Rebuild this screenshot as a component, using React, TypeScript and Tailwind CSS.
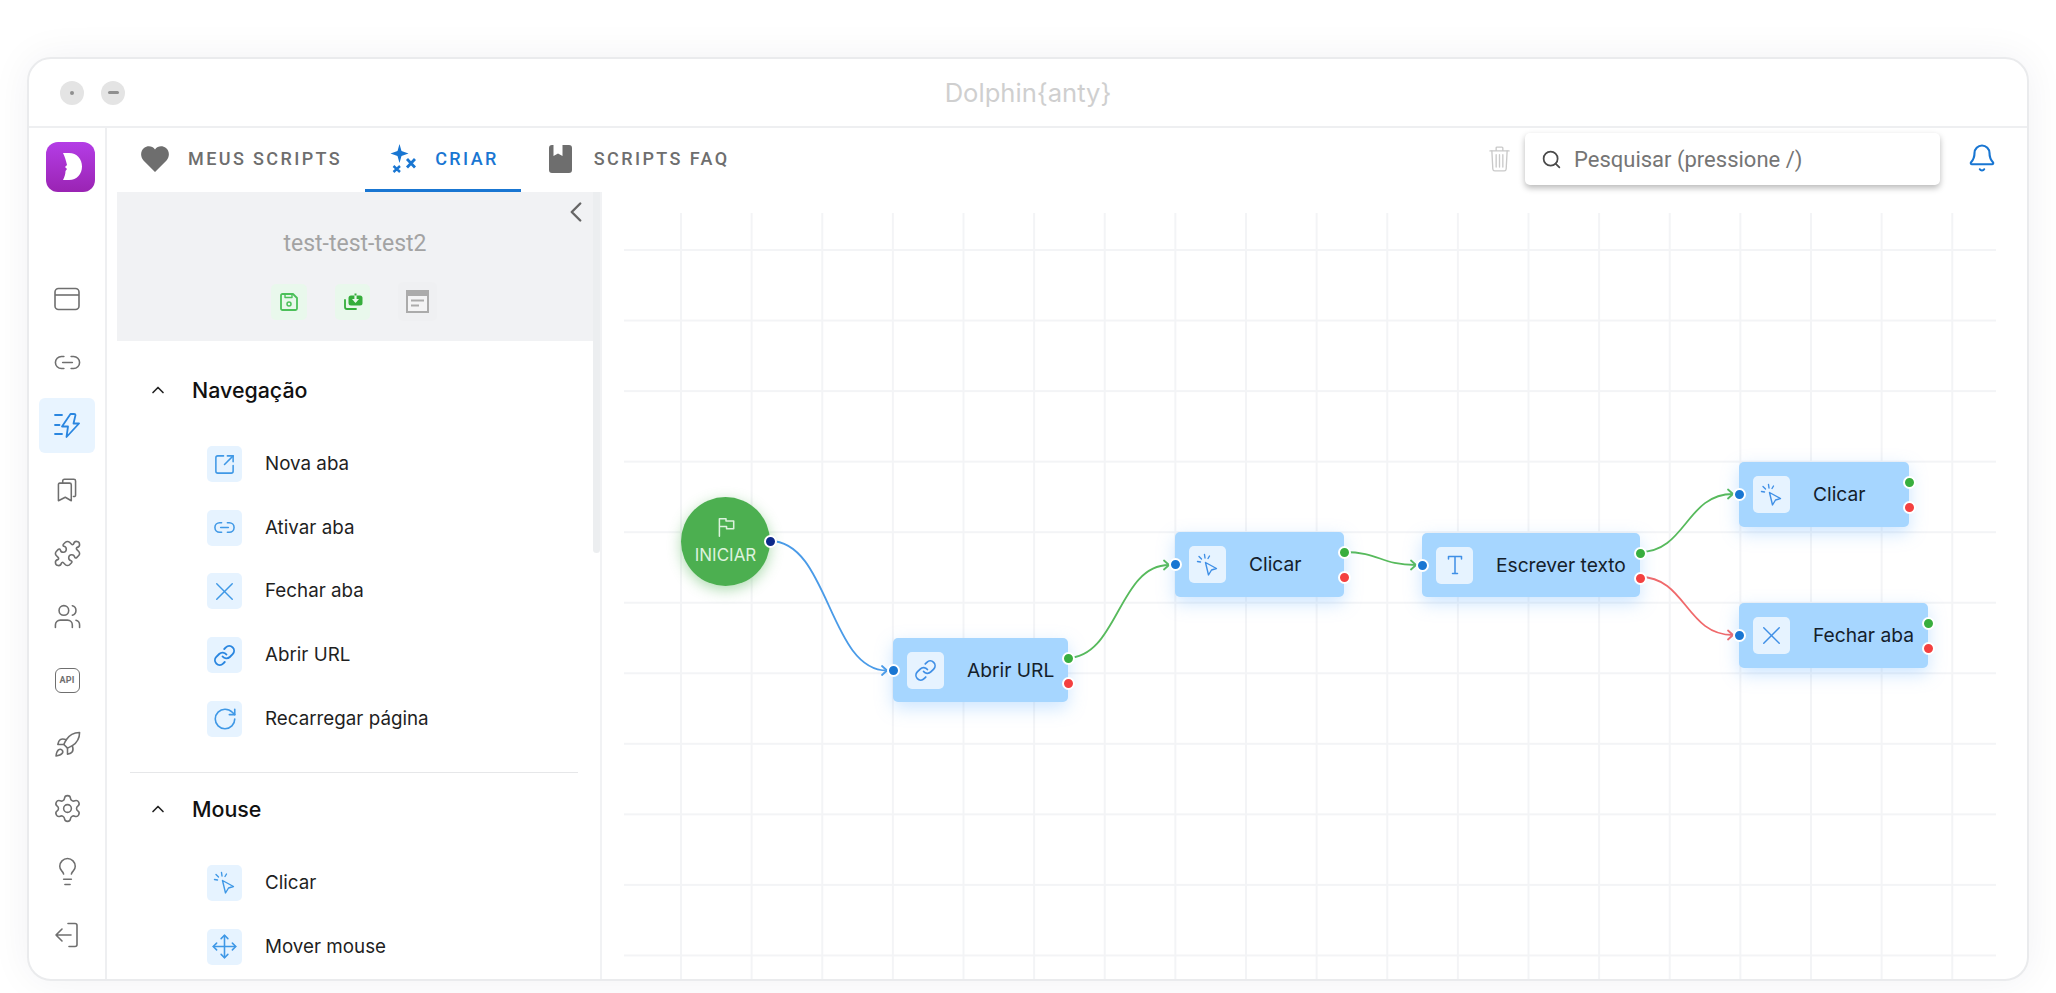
import {
  ChevronLeft,
  ChevronUp,
  Link,
  Link2,
  Lightbulb,
  Move,
  Puzzle,
  RotateCw,
  Rocket,
  Search,
  Settings,
  SquareArrowOutUpRight,
  Users,
  X,
  Bell,
} from 'lucide-react';
import type { ReactNode } from 'react';

const inter = '[font-family:Inter,sans-serif]';
const roboto = '[font-family:Roboto,sans-serif]';

function ClickIcon({ className }: { className?: string }) {
  return (
    <svg viewBox="0 0 24 24" fill="none" stroke="currentColor" strokeWidth="1.4" strokeLinecap="round" strokeLinejoin="round" className={className}>
      <path d="M9.500 9.500 L20.500 15.500 L15.500 17 L12.500 22 Z" />
      <path d="M8.500 1.500 L9 5 M3 3.500 L5.500 6 M1.500 8.500 L4.500 9 M13.500 3 L12 5.500" />
    </svg>
  );
}

function TextIcon({ className }: { className?: string }) {
  return (
    <svg viewBox="0 0 24 24" fill="none" stroke="currentColor" strokeWidth="1.5" strokeLinecap="round" strokeLinejoin="round" className={className}>
      <path d="M5.500 6 V3.500 H18.500 V6 M12 3.500 V20.500 M9.500 20.500 H14.500" />
    </svg>
  );
}

function BrowserIcon() {
  return (
    <svg viewBox="0 0 26 24" fill="none" stroke="currentColor" strokeWidth="1.6" className="w-[26px] h-[24px]">
      <rect x="1" y="1.500" width="24" height="21" rx="3.500" />
      <path d="M1 8 H25" />
    </svg>
  );
}

function FlowIcon() {
  return (
    <svg viewBox="0 0 26 25" fill="none" stroke="currentColor" strokeWidth="1.800" strokeLinecap="round" strokeLinejoin="round" className="w-[26px] h-[25px]">
      <path d="M1 2 H8 M1 12 H5.500 M1 21 H8" />
      <path d="M16.500 1 L8 13.500 H14 L12.500 24 L25 10.500 H19.500 L21.500 2 Q21.500 1 20 1 Z" />
    </svg>
  );
}

function BookmarksIcon() {
  return (
    <svg viewBox="0 0 24 28" fill="none" stroke="currentColor" strokeWidth="1.800" strokeLinejoin="round" strokeLinecap="round" className="w-[22px] h-[24px]">
      <path d="M7 6 V3.500 Q7 1.500 9 1.500 H20 Q22 1.500 22 3.500 V20 Q22 22 19.500 21.500" />
      <path d="M3.500 6 H15 Q17 6 17 8 V26.500 L10 22.500 L2 26.500 V7.500 Q2 6 3.500 6 Z" />
    </svg>
  );
}

function ApiIcon() {
  return (
    <div className="w-[25px] h-[25px] rounded-[6px] border-[1.600px] border-current flex items-center justify-center">
      <span className={`${roboto} text-[9px] font-bold leading-none tracking-[0.2px]`}>API</span>
    </div>
  );
}

function ExitIcon() {
  return (
    <svg viewBox="0 0 26 26" fill="none" stroke="currentColor" strokeWidth="1.6" strokeLinecap="round" strokeLinejoin="round" className="w-[26px] h-[26px]">
      <path d="M14 1.500 H21 Q23 1.500 23 3.500 V22.500 Q23 24.500 21 24.500 H15" />
      <path d="M17 13 H2 M8 7 L2 13 L8 19" />
    </svg>
  );
}

function HeartIcon() {
  return (
    <svg viewBox="0 0 28 26" fill="currentColor" className="w-[28px] h-[26px]">
      <path d="M14 26 L2.500 14.500 C-1 10.500 -.5 5 3 2 C6.500 -.8 11.500 -.2 14 3.500 C16.500 -.2 21.500 -.8 25 2 C28.500 5 29 10.500 25.500 14.500 Z" />
    </svg>
  );
}

function SparkIcon() {
  return (
    <svg viewBox="0 0 26 29" fill="currentColor" stroke="currentColor" className="w-[26px] h-[29px]">
      <path d="M9.500 0 L11.500 7 L18.500 9.500 L11.500 12 L9.500 19 L7.500 12 L.5 9.500 L7.500 7 Z" stroke="none" />
      <path d="M17 15 L25 23.500 M25 15 L17 23.500" strokeWidth="2.800" />
      <path d="M3.500 22 L10 28 M10 22 L3.500 28" strokeWidth="2.400" />
    </svg>
  );
}

function BookIcon() {
  return (
    <svg viewBox="0 0 23 28" fill="currentColor" className="w-[23px] h-[28px]">
      <path d="M3 0 H4.500 V11 L9 8.500 L13.500 11 V0 H20 Q23 0 23 3 V25 Q23 28 20 28 H3 Q0 28 0 25 V3 Q0 0 3 0 Z" />
    </svg>
  );
}

function TrashIcon() {
  return (
    <svg viewBox="0 0 22 27" fill="none" stroke="currentColor" strokeWidth="1.400" strokeLinecap="round" strokeLinejoin="round" className="w-[21px] h-[26px] text-[#c9c9c9]">
      <path d="M1 5 H21 M7.500 5 V2 Q7.500 1 8.500 1 H13.500 Q14.500 1 14.500 2 V5" />
      <path d="M3 5 L4 24 Q4.200 26 6 26 H16 Q17.800 26 18 24 L19 5" />
      <path d="M7.500 9 V22 M11 9 V22 M14.500 9 V22" />
    </svg>
  );
}

function LogoIcon() {
  return (
    <svg viewBox="0 0 49 50" className="w-[49px] h-[50px]">
      <defs>
        <linearGradient id="logoFill" x1="0" y1="0" x2="0" y2="1">
          <stop offset="0" stopColor="#b43de6" />
          <stop offset="1" stopColor="#9a24b3" />
        </linearGradient>
      </defs>
      <rect width="49" height="50" rx="12" fill="url(#logoFill)" />
      <path d="M17 11 H23 C31 11 36 17 36 24.500 C36 32 31 38 23 38 H17 C18.500 35 19.500 32 19.500 29 L21 27 L19 25 L21 23 C20 19 19 15 17 11 Z" fill="#fff" />
    </svg>
  );
}

function FlagIcon() {
  return (
    <svg viewBox="0 0 20 20" fill="none" stroke="currentColor" strokeWidth="1.400" strokeLinejoin="round" strokeLinecap="round" className="w-[22px] h-[22px]">
      <path d="M4 18.500 V2.500 H10 V4.500 H17 V11.500 H10.500 V9.500 H4" />
    </svg>
  );
}

function SaveIcon() {
  return (
    <svg viewBox="0 0 18 18" fill="none" stroke="currentColor" strokeWidth="1.800" strokeLinejoin="round" className="w-[18px] h-[18px]">
      <path d="M2.500 1 H13 L17 5 V15.500 Q17 17 15.500 17 H2.500 Q1 17 1 15.500 V2.500 Q1 1 2.500 1 Z" />
      <path d="M5 1 V4.500 H12 V1" strokeWidth="1.400" />
      <circle cx="9" cy="11" r="2" strokeWidth="1.500" />
    </svg>
  );
}

function InstallIcon() {
  return (
    <svg viewBox="0 0 20 17" fill="none" className="w-[20px] h-[17px]">
      <path d="M2 7 V14 Q2 16 4 16 H13" stroke="currentColor" strokeWidth="1.800" strokeLinecap="round" />
      <rect x="5.500" y="2.500" width="14" height="10" rx="2.500" fill="currentColor" />
      <path d="M12.500 .5 V8.500" stroke="#e9f8ec" strokeWidth="2.200" />
      <path d="M9 6 L12.500 10 L16 6 Z" fill="#e9f8ec" />
      <path d="M12.500 .5 V2.500" stroke="currentColor" strokeWidth="2" />
    </svg>
  );
}

function NotesIcon() {
  return (
    <svg viewBox="0 0 23 23" fill="none" stroke="currentColor" strokeWidth="2" className="w-[23px] h-[23px]">
      <rect x="1" y="1" width="21" height="21" fill="#f4f4f5" />
      <path d="M1 3.500 H22" strokeWidth="5" />
      <path d="M5 10.500 H18 M5 15.500 H13" strokeWidth="2" />
    </svg>
  );
}

function SideButton({ children, active }: { children: ReactNode; active?: boolean }) {
  return (
    <button
      className={`w-[56px] h-[55px] flex items-center justify-center rounded-[6px] ${
        active ? 'bg-[#e8f4ff] text-[#2a86e0]' : 'text-[#6f6f6f]'
      }`}
    >
      {children}
    </button>
  );
}

function Sidebar() {
  const stroke = 'w-[29px] h-[29px] stroke-[1.300]';
  return (
    <aside className="w-[78px] shrink-0 border-r-2 border-[#eeeff1] flex flex-col items-center pt-[14px]">
      <div className="ml-[7px]">
        <LogoIcon />
      </div>
      <div className="mt-[79px] flex flex-col gap-[8.700px]">
        <SideButton><BrowserIcon /></SideButton>
        <SideButton><Link2 className={stroke} /></SideButton>
        <SideButton active><FlowIcon /></SideButton>
        <SideButton><BookmarksIcon /></SideButton>
        <SideButton><Puzzle className={stroke} /></SideButton>
        <SideButton><Users className={stroke} /></SideButton>
        <SideButton><ApiIcon /></SideButton>
        <SideButton><Rocket className={stroke} /></SideButton>
        <SideButton><Settings className="w-[31px] h-[31px] stroke-[1.200]" /></SideButton>
        <SideButton><Lightbulb className="w-[31px] h-[31px] stroke-[1.200]" /></SideButton>
        <SideButton><ExitIcon /></SideButton>
      </div>
    </aside>
  );
}

function TopBar() {
  const tab = `${roboto} text-[18px] font-medium tracking-[2.400px] uppercase`;
  return (
    <header className="h-[64px] shrink-0 flex items-start">
      <nav className="ml-[10px] flex h-full">
        <div className="flex items-center pl-[24px] pr-[23px] gap-[19px] text-[#6e6e6e] pb-[3px]">
          <HeartIcon />
          <span className={tab}>Meus scripts</span>
        </div>
        <div className="flex items-center pl-[25px] pr-[22px] gap-[19px] text-[#1976d2] border-b-[3px] border-[#1976d2]">
          <SparkIcon />
          <span className={tab}>Criar</span>
        </div>
        <div className="flex items-center pl-[28px] gap-[22px] text-[#6e6e6e] pb-[3px]">
          <BookIcon />
          <span className={tab}>Scripts FAQ</span>
        </div>
      </nav>
      <div className="ml-auto pr-[30px] pt-[5px] flex items-center">
        <TrashIcon />
        <div className="ml-[15px] w-[415px] h-[52px] rounded-[5px] bg-white shadow-[0_3px_6px_rgba(0,0,0,0.28)] flex items-center pl-[16px] gap-[12px]">
          <Search className="w-[21px] h-[21px] text-[#4a4a4a] stroke-[2]" />
          <span className={`${roboto} text-[22px] text-[#757575]`}>Pesquisar (pressione /)</span>
        </div>
        <Bell className="ml-[27px] w-[30px] h-[34px] text-[#1976d2] stroke-[1.700] -mt-[3px]" />
      </div>
    </header>
  );
}

function SquareBadge({ children }: { children: ReactNode }) {
  return (
    <div className="w-[35px] h-[36px] rounded-[5px] bg-[#e6f3ff] text-[#3f98e6] flex items-center justify-center shrink-0">
      {children}
    </div>
  );
}

function PanelItem({ icon, label }: { icon: ReactNode; label: string }) {
  return (
    <div className="flex items-center gap-[23px]">
      <SquareBadge>{icon}</SquareBadge>
      <span className={`${inter} text-[18.800px] text-[#1f1f1f]`}>{label}</span>
    </div>
  );
}

function SectionTitle({ label }: { label: string }) {
  return (
    <div className="flex items-center h-[42px] pl-[31px] gap-[24px]">
      <ChevronUp className="w-[20px] h-[20px] text-[#222] stroke-[2]" />
      <span className={`${inter} text-[21.400px] font-medium text-[#111]`}>{label}</span>
    </div>
  );
}

function ScriptPanel() {
  const ic = 'w-[23px] h-[23px] stroke-[1.600]';
  return (
    <div className="shrink-0 ml-[10px] flex border-r-2 border-[#f1f2f4]">
      <div className="w-[476px] flex flex-col overflow-hidden">
        <div className="h-[149px] shrink-0 bg-[#f1f2f4] relative flex flex-col items-center">
          <ChevronLeft className="absolute right-[0px] top-[3px] w-[34px] h-[34px] text-[#666] stroke-[1.700]" />
          <div className={`${roboto} mt-[38px] text-[23px] leading-[28px] text-[#a3a3a3]`}>test-test-test2</div>
          <div className="mt-[24px] flex gap-[28px] items-center -ml-[2px]">
            <div className="w-[36px] h-[36px] rounded-[5px] bg-[#e9f8ec] text-[#4cc05a] flex items-center justify-center">
              <SaveIcon />
            </div>
            <div className="w-[35px] h-[36px] rounded-[5px] bg-[#e9f8ec] text-[#35ae3b] flex items-center justify-center">
              <InstallIcon />
            </div>
            <div className="w-[39px] h-[39px] rounded-[5px] bg-[#eff0f2] text-[#ababab] flex items-center justify-center">
              <NotesIcon />
            </div>
          </div>
        </div>
        <div className="pt-[28px]">
          <SectionTitle label="Navegação" />
          <div className="mt-[35px] pl-[90px] flex flex-col gap-[27.700px]">
            <PanelItem label="Nova aba" icon={<SquareArrowOutUpRight className={ic} />} />
            <PanelItem label="Ativar aba" icon={<Link2 className={ic} />} />
            <PanelItem label="Fechar aba" icon={<X className="w-[31px] h-[31px] stroke-[1.100]" />} />
            <PanelItem label="Abrir URL" icon={<Link className="w-[23px] h-[23px] stroke-[2] text-[#2a86e0]" />} />
            <PanelItem label="Recarregar página" icon={<RotateCw className="w-[26px] h-[26px] stroke-[1.500]" />} />
          </div>
          <div className="mt-[35px] mx-[13px] w-[448px] h-[1.500px] bg-[#e6e7e9]" />
          <div className="mt-[15px]">
            <SectionTitle label="Mouse" />
          </div>
          <div className="mt-[35px] pl-[90px] flex flex-col gap-[27.700px]">
            <PanelItem label="Clicar" icon={<ClickIcon className="w-[24px] h-[24px]" />} />
            <PanelItem label="Mover mouse" icon={<Move className="w-[27px] h-[27px] stroke-[1.400]" />} />
          </div>
        </div>
      </div>
      <div className="w-[7px]">
        <div className="h-[361px] bg-[#eceef0] rounded-b-[4px]" />
      </div>
    </div>
  );
}

function Handle({ place, color }: { place: string; color: string }) {
  return <span className={`absolute w-[13px] h-[13px] rounded-full border-2 border-white ${color} ${place}`} />;
}

const edges = [
  { d: 'M146 328 C205 328 205 457.500 263 457.500', color: '#4a9be8', x: 263, y: 457.500 },
  { d: 'M443 445 C494 445 494 352 545 352', color: '#57ba5c', x: 545, y: 352 },
  { d: 'M720 339 C756 339 756 352 792 352', color: '#57ba5c', x: 792, y: 352 },
  { d: 'M1016 339 C1062 339 1062 281 1109 281', color: '#57ba5c', x: 1109, y: 281 },
  { d: 'M1016 364 C1062 364 1062 422 1109 422', color: '#f0696b', x: 1109, y: 422 },
];

const nodes = [
  { label: 'Abrir URL', place: 'left-[269px] top-[425px] w-[175px] h-[64px]', icon: <Link className="w-[23px] h-[23px] stroke-[1.800]" /> },
  { label: 'Clicar', place: 'left-[551px] top-[319px] w-[169px] h-[65px]', icon: <ClickIcon className="w-[24px] h-[24px]" /> },
  { label: 'Escrever texto', place: 'left-[798px] top-[320px] w-[218px] h-[64px]', icon: <TextIcon className="w-[24px] h-[24px]" /> },
  { label: 'Clicar', place: 'left-[1115px] top-[249px] w-[170px] h-[65px]', icon: <ClickIcon className="w-[24px] h-[24px]" /> },
  { label: 'Fechar aba', place: 'left-[1115px] top-[390px] w-[189px] h-[65px]', icon: <X className="w-[31px] h-[31px] stroke-[1.100]" /> },
];

function FlowCanvas() {
  return (
    <div className="flex-1 min-w-0 pt-[21px] pl-[22px] pr-[31px] overflow-hidden">
      <div className="relative h-[767px] bg-[linear-gradient(to_right,#f3f4f6_2px,transparent_2px),linear-gradient(to_bottom,#f3f4f6_2px,transparent_2px)] bg-[size:70.630px_70.550px] bg-[position:56px_36px]">
        <svg className="absolute inset-0 w-full h-full overflow-visible" fill="none" strokeWidth="1.800" strokeLinecap="round" strokeLinejoin="round">
          {edges.map((e) => (
            <g key={e.d} stroke={e.color}>
              <path d={e.d} />
              <path d={`M${e.x - 5} ${e.y - 4.500} L${e.x} ${e.y} L${e.x - 5} ${e.y + 4.500}`} />
            </g>
          ))}
        </svg>

        <div className="absolute left-[57px] top-[284px] w-[89px] h-[89px] rounded-full bg-[#4caf50] shadow-[0_4px_14px_rgba(76,175,80,0.45)] text-[#dcf2dd] flex flex-col items-center pt-[19px]">
          <FlagIcon />
          <span className={`${inter} mt-[8px] text-[17px] leading-[18px]`}>INICIAR</span>
          <span className="absolute right-[-6.500px] top-[38px] w-[13px] h-[13px] rounded-full border-2 border-white bg-[#0d2a8a]" />
        </div>

        {nodes.map((n) => (
          <div
            key={n.place}
            className={`absolute ${n.place} rounded-[5px] bg-[#a6d6ff] shadow-[0_6px_18px_rgba(110,180,255,0.35)] flex items-center pl-[14px] gap-[23px]`}
          >
            <div className="w-[37px] h-[37px] rounded-[5px] bg-[#e6f3ff] text-[#3f8fe6] flex items-center justify-center shrink-0">
              {n.icon}
            </div>
            <span className={`${inter} text-[19.200px] text-[#14202b] whitespace-nowrap`}>{n.label}</span>
            <Handle place="left-[-6.500px] top-[calc(50%-6.500px)]" color="bg-[#1976d2]" />
            <Handle place="right-[-6.500px] top-[13.500px]" color="bg-[#38ae3e]" />
            <Handle place="right-[-6.500px] top-[38.500px]" color="bg-[#f44040]" />
          </div>
        ))}
      </div>
    </div>
  );
}

export default function App() {
  return (
    <div className="w-[2056px] h-[993px] overflow-hidden bg-white pl-[27px] pt-[57px]">
      <div className="w-[2002px] h-[924px] rounded-[24px] border-2 border-[#eaebed] bg-white shadow-[0_0_40px_rgba(20,20,60,0.06)] flex flex-col overflow-hidden">
        <div className="h-[69px] shrink-0 border-b-2 border-[#eeeff1] relative flex items-center pl-[31px] gap-[17px]">
          <span className="w-[24px] h-[24px] rounded-full bg-[#e4e4e4] flex items-center justify-center">
            <span className="w-[4px] h-[4px] rounded-full bg-[#8f8f8f]" />
          </span>
          <span className="w-[24px] h-[24px] rounded-full bg-[#e4e4e4] flex items-center justify-center">
            <span className="w-[11px] h-[3px] rounded-full bg-[#8f8f8f]" />
          </span>
          <span className={`${inter} absolute left-0 right-0 top-[18px] text-center text-[25.600px] leading-[31px] text-[#cfcfcf]`}>Dolphin{'{anty}'}</span>
        </div>
        <div className="flex-1 min-h-0 flex">
          <Sidebar />
          <div className="flex-1 min-w-0 flex flex-col">
            <TopBar />
            <div className="flex-1 min-h-0 flex">
              <ScriptPanel />
              <FlowCanvas />
            </div>
          </div>
        </div>
      </div>
    </div>
  );
}
